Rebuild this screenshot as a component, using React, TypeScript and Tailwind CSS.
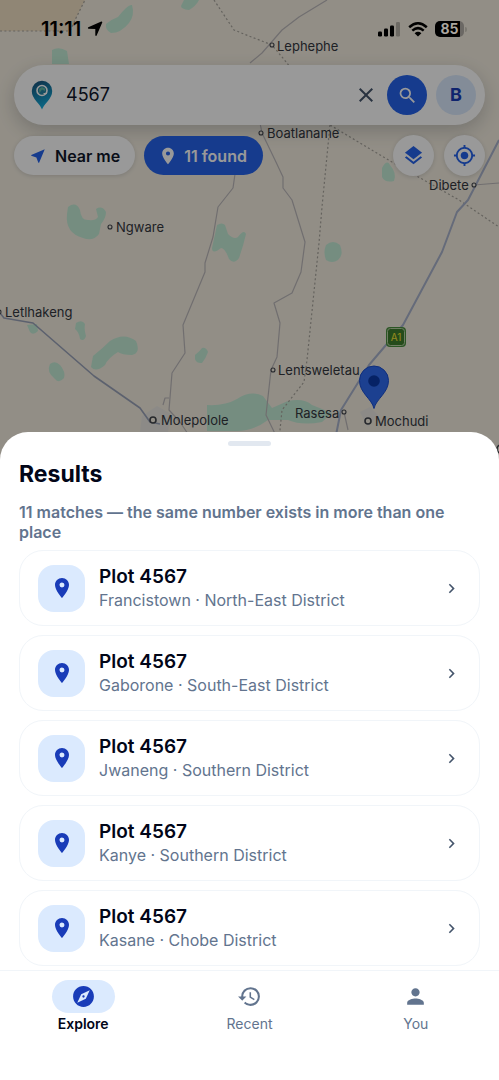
import React, { useState } from "react";
import {
  MdChevronRight,
  MdClose,
  MdExplore,
  MdHistory,
  MdLayers,
  MdMyLocation,
  MdNearMe,
  MdPerson,
  MdPlace,
  MdSearch,
} from "react-icons/md";

type Plot = { id: string; town: string; district: string };

const plots: Plot[] = [
  { id: "francistown", town: "Francistown", district: "North-East District" },
  { id: "gaborone", town: "Gaborone", district: "South-East District" },
  { id: "jwaneng", town: "Jwaneng", district: "Southern District" },
  { id: "kanye", town: "Kanye", district: "Southern District" },
  { id: "kasane", town: "Kasane", district: "Chobe District" },
];

type Place = { name: string; x: number; y: number; dotX: number; dotY: number; big?: boolean };

const places: Place[] = [
  { name: "Lephephe", x: 277, y: 51, dotX: 272, dotY: 45 },
  { name: "Boatlaname", x: 267, y: 138, dotX: 261, dotY: 133 },
  { name: "Dibete", x: 429, y: 190, dotX: 474, dotY: 185 },
  { name: "Ngware", x: 116, y: 232, dotX: 110, dotY: 227 },
  { name: "Letlhakeng", x: 5, y: 317, dotX: -1, dotY: 312 },
  { name: "Lentsweletau", x: 278, y: 375, dotX: 273, dotY: 370 },
  { name: "Rasesa", x: 295, y: 418, dotX: 344, dotY: 412 },
  { name: "Molepolole", x: 161, y: 425, dotX: 153, dotY: 420, big: true },
  { name: "Mochudi", x: 375, y: 426, dotX: 368, dotY: 421, big: true },
];

function MapCanvas() {
  return (
    <svg
      className="absolute inset-x-0 top-0 h-[480px] w-full bg-[#f3ede0]"
      viewBox="0 0 499 480"
      preserveAspectRatio="xMidYMin slice"
      aria-hidden="true"
    >
      <path d="M0 0H85L76 18L70 31H0Z" fill="#f0dfc4" />

      <g fill="#c3ecd6">
        <path d="M106 24q6-5 12-7q10-13 14-12q3 10-3 18q-8 10-18 10q-6-3-5-9Z" />
        <path d="M52 50q7-4 15 1l2 13H52Z" />
        <path d="M184 0h15q-3 6-10 10q-8-1-8-4Z" />
        <path d="M68 207q8-6 12 3q1 11 9 10q6 1 9-3l-2-8q6-4 10 3q0 6-5 12l-2 10q-6 8-16 4q-18-5-16-24Z" />
        <path d="M217 225q5-3 8 0l3 9q6 6 10 3q6-8 8-3q-3 13-7 24q-5 7-10 1q-4-11-8-11q-9 7-9 0Z" />
        <path d="M326 245q7-6 14 0q4 10-2 15q-6 4-12 0q-3-8 0-15Z" />
        <path d="M382 168q5-9 8-3q7 8 4 16q-9 2-12-4Z" />
        <path d="M27 325l10-1l1 7q-5 5-8 1Z" />
        <path d="M76 323q6-4 9 1q-1 5 1 12q-2 6-6 3q-1-7-5-10Z" />
        <path d="M93 356q10-8 17-15q14-9 26 0q5 12-4 14q-10 0-14-3q-10 6-13 13q-9 8-14 2Z" />
        <path d="M50 364q5-4 10 1q6 7 4 13q-5 6-9 1q-9-7-5-15Z" />
        <path d="M195 355q5-4 7-7q4-1 6 4q-2 6-6 11q-8 1-7-8Z" />
        <path d="M207 405q18 1 30-6q14-9 26-3l9 12l16-7q16-3 24 4l20 8l-10 9q-20 4-34-2h-20q-16 12-34 11h-27Z" />
      </g>
      <path d="M142 416l15-10l14 8l-3 18h-28Z" fill="#e9e7e1" />
      <path d="M360 412l10-5l8 8l-10 12Z" fill="#e9e7e1" />

      <g fill="none" stroke="#bcb8ba" strokeWidth="1.2" strokeLinejoin="round">
        <path d="M327 0L299 17L282 30L262 53L250 63" />
        <path d="M235 174L233 188L218 207L213 237L205 263V272L183 325L185 353L172 373L169 410L180 422L192 440" />
        <path d="M169 398h-4l-2 7" />
        <path d="M260 123L262 133L275 160L283 177V188L292 200L305 242L301 272L292 293L274 303L280 323L277 357L271 370L266 415L278 440" />
        <path d="M474 185L499 183" />
        <path d="M344 412L348 430" />
      </g>
      <g fill="none" stroke="#a8a49c" strokeWidth="1.2" strokeDasharray="2 2.4">
        <path d="M0 31H70L76 18L85 0" />
        <path d="M214 0L234 30L249 36L272 45L287 63L330 125L392 162L459 200L499 227" />
        <path d="M330 125L322 207L319 243L307 360L304 382L282 410L279 440" />
      </g>
      <g fill="none" stroke="#a9b2cb" strokeWidth="2" strokeLinejoin="round">
        <path d="M0 313L4 318L33 323L94 376L140 408L150 422L160 424" stroke="#9aa2b8" strokeWidth="1.6" />
        <path d="M499 140L468 200L457 212L442 252L403 325L369 365L341 410L335 440" />
      </g>

      <g fontFamily="Inter, 'Liberation Sans', sans-serif" fontSize="13" fill="#34373e">
        {places.map((p) => (
          <g key={p.name}>
            <circle
              cx={p.dotX}
              cy={p.dotY}
              r={p.big ? 3 : 2}
              fill="#f3ede0"
              stroke="#42454c"
              strokeWidth={p.big ? 1.6 : 1.1}
            />
            <text x={p.x} y={p.y}>
              {p.name}
            </text>
          </g>
        ))}
        <circle cx="501" cy="449" r="4" fill="none" stroke="#42454c" strokeWidth="1.6" />
      </g>

      <rect x="386" y="327" width="20" height="20" rx="4" fill="#4a8f3f" />
      <rect x="387.5" y="328.5" width="17" height="17" rx="3" fill="#3f7d2e" stroke="#b9d3a6" strokeWidth="1" />
      <text
        x="396"
        y="341"
        textAnchor="middle"
        fontFamily="Inter, sans-serif"
        fontSize="10"
        fill="#f7e733"
      >
        A1
      </text>

      <path
        d="M374 408.500C372 399 359.500 393 359.500 380.500A14.500 14.500 0 0 1 388.500 380.500C388.500 393 376 399 374 408.500Z"
        fill="#2f6bf0"
        stroke="#1b4ed0"
        strokeWidth="1"
      />
      <circle cx="374" cy="381" r="5.800" fill="#0b3aa8" />
    </svg>
  );
}

function StatusBar() {
  return (
    <div className="relative z-20 flex h-[58px] items-center justify-between pl-[41px] pr-8 text-black">
      <div className="flex items-center gap-1.5">
        <span className="text-xl font-semibold leading-6">11:11</span>
        <svg width="16" height="16" viewBox="0 0 16 16" aria-hidden="true">
          <path
            d="M14.600 1.200L9 14.200V7.200L1.600 7Z"
            stroke="#000"
            strokeWidth="1.400"
            strokeLinejoin="round"
          />
        </svg>
      </div>
      <div className="flex items-center gap-[7px]">
        <svg width="23" height="15" viewBox="0 0 23 15" aria-hidden="true">
          <rect x="0" y="9.500" width="4" height="5" rx="1.200" />
          <rect x="6" y="6.500" width="4" height="8" rx="1.200" />
          <rect x="12" y="3.500" width="4" height="11" rx="1.200" />
          <rect x="18" y="0" width="4" height="14.500" rx="1.200" opacity=".25" />
        </svg>
        <svg width="20" height="15" viewBox="0 0 20 15" aria-hidden="true">
          <path
            d="M1.200 5.200Q10-2.600 18.800 5.200M4.300 8.600Q10 3.700 15.700 8.600"
            fill="none"
            stroke="#000"
            strokeWidth="2.500"
          />
          <path d="M10 14.500L6.600 11.200Q10 8.400 13.400 11.200Z" />
        </svg>
        <span className="flex items-center gap-px">
          <span className="flex h-4 w-[29px] items-center justify-center rounded-[5px] bg-linear-to-r from-black from-85% to-[#6b6864] to-85% text-sm font-bold leading-4 text-[#aaa69f]">
            85
          </span>
          <span className="h-[5px] w-0.5 rounded-r-full bg-[#7b7871]" />
        </span>
      </div>
    </div>
  );
}

function BrandPin() {
  return (
    <svg width="22" height="30" viewBox="0 0 22 30" className="shrink-0" aria-hidden="true">
      <defs>
        <linearGradient id="brand" x1="0" y1="0" x2=".3" y2="1">
          <stop offset="0" stopColor="#1b4f78" />
          <stop offset=".45" stopColor="#1679a3" />
          <stop offset="1" stopColor="#14abdc" />
        </linearGradient>
      </defs>
      <path
        d="M11 29.500Q10 26.500 5.500 21.500Q.8 16 .8 11A10.200 10.200 0 0 1 21.200 11Q21.200 16 16.500 21.500Q12 26.500 11 29.500Z"
        fill="url(#brand)"
      />
      <circle cx="11" cy="10.500" r="5" fill="#2583a3" stroke="#fff" strokeWidth="1.600" />
      <path d="M8 9l3-2l3 1.500v2.500l-3-1.500l-2.500 3.500Z" fill="#63b8a4" />
      <path d="M12.500 13.500h3.500" stroke="#fff" strokeWidth="1" />
    </svg>
  );
}

function SearchBar() {
  const [query, setQuery] = useState("4567");

  return (
    <form
      onSubmit={(e) => e.preventDefault()}
      className="flex h-[60px] items-center rounded-full bg-white pl-[17px] pr-[9px] shadow-[0_6px_18px_rgba(15,23,42,0.2)]"
    >
      <BrandPin />
      <input
        aria-label="Plot number"
        value={query}
        onChange={(e) => setQuery(e.target.value)}
        className="ml-[13px] min-w-0 flex-1 bg-transparent text-lg text-slate-900 focus:outline-none"
      />
      <button type="button" aria-label="Clear" onClick={() => setQuery("")} className="mr-[7px] p-0.5 text-slate-600">
        <MdClose size={24} />
      </button>
      <button
        type="submit"
        aria-label="Search"
        className="flex size-10 items-center justify-center rounded-full bg-[#2563eb] text-white"
      >
        <MdSearch size={21} />
      </button>
      <button
        type="button"
        aria-label="Account"
        className="ml-[9px] flex size-10 items-center justify-center rounded-full bg-blue-100 text-lg font-bold text-blue-800"
      >
        B
      </button>
    </form>
  );
}

function MapActions() {
  return (
    <div className="mt-[10px] flex items-center">
      <button
        type="button"
        className="flex h-[39px] items-center gap-2 rounded-full bg-white px-[15px] text-base font-semibold text-slate-900 shadow-[0_1px_4px_rgba(15,23,42,0.15)]"
      >
        <MdNearMe size={18} className="text-[#2563eb]" />
        Near me
      </button>
      <button
        type="button"
        className="ml-[9px] flex h-[39px] items-center gap-1.5 rounded-full bg-[#2563eb] px-[14px] text-base font-semibold text-white"
      >
        <MdPlace size={20} />
        <span className="pr-0.5">11 found</span>
      </button>
      <div className="ml-auto flex gap-[10px] text-[#2563eb]">
        <button
          type="button"
          aria-label="Map layers"
          className="flex size-[41px] items-center justify-center rounded-full bg-white shadow-[0_1px_4px_rgba(15,23,42,0.15)]"
        >
          <MdLayers size={23} />
        </button>
        <button
          type="button"
          aria-label="My location"
          className="flex size-[41px] items-center justify-center rounded-full bg-white shadow-[0_1px_4px_rgba(15,23,42,0.15)]"
        >
          <MdMyLocation size={23} />
        </button>
      </div>
    </div>
  );
}

function ResultCard({ plot }: { plot: Plot }) {
  return (
    <li>
      <button
        type="button"
        className="flex h-[76px] w-full items-center rounded-3xl border border-slate-100 bg-white px-[18px] text-left"
      >
        <span className="flex size-[47px] shrink-0 items-center justify-center rounded-2xl bg-blue-100 text-blue-800">
          <MdPlace size={24} />
        </span>
        <span className="ml-[14px] flex-1">
          <span className="block text-[19px] font-semibold leading-6 text-slate-950">Plot 4567</span>
          <span className="block text-base leading-[22px] text-slate-500">
            {plot.town} · {plot.district}
          </span>
        </span>
        <MdChevronRight size={19} className="text-slate-600" />
      </button>
    </li>
  );
}

const tabs = [
  { id: "explore", label: "Explore", Icon: MdExplore },
  { id: "recent", label: "Recent", Icon: MdHistory },
  { id: "you", label: "You", Icon: MdPerson },
];

function BottomNav() {
  const [active, setActive] = useState("explore");

  return (
    <nav className="relative z-20 grid h-[110px] shrink-0 grid-cols-3 items-start border-t border-slate-100 bg-white pt-[9px]">
      {tabs.map(({ id, label, Icon }) => {
        const on = id === active;
        return (
          <button key={id} type="button" onClick={() => setActive(id)} className="flex flex-col items-center">
            <span
              className={`flex h-[33px] w-[63px] items-center justify-center rounded-full ${
                on ? "bg-blue-100 text-blue-800" : "text-slate-500"
              }`}
            >
              <Icon size={25} />
            </span>
            <span
              className={`mt-0.5 text-sm leading-[18px] ${
                on ? "font-semibold text-slate-950" : "text-slate-500"
              }`}
            >
              {label}
            </span>
          </button>
        );
      })}
    </nav>
  );
}

export default function App() {
  return (
    <div className="relative flex min-h-screen flex-col bg-white font-[Inter,'Liberation_Sans',sans-serif]">
      <MapCanvas />
      <header className="relative h-[432px] shrink-0">
        <StatusBar />
        <div className="relative px-[14px] pt-[7px]">
          <SearchBar />
          <MapActions />
        </div>
      </header>
      <div className="absolute inset-x-0 top-0 z-10 h-[480px] bg-black/40" />

      <main className="relative z-20 flex flex-1 flex-col rounded-t-[28px] bg-white px-[19px] pt-[9px]">
        <span className="h-[5px] w-[43px] self-center rounded-full bg-slate-200" />
        <h1 className="mt-3 text-[23px] font-bold leading-8 text-slate-950">Results</h1>
        <p className="mt-3 text-base font-semibold leading-5 text-slate-500">
          11 matches — the same number exists in more than one place
        </p>
        <ul className="mt-2 flex flex-col gap-[9px]">
          {plots.map((plot) => (
            <ResultCard key={plot.id} plot={plot} />
          ))}
        </ul>
      </main>
      <BottomNav />
    </div>
  );
}
